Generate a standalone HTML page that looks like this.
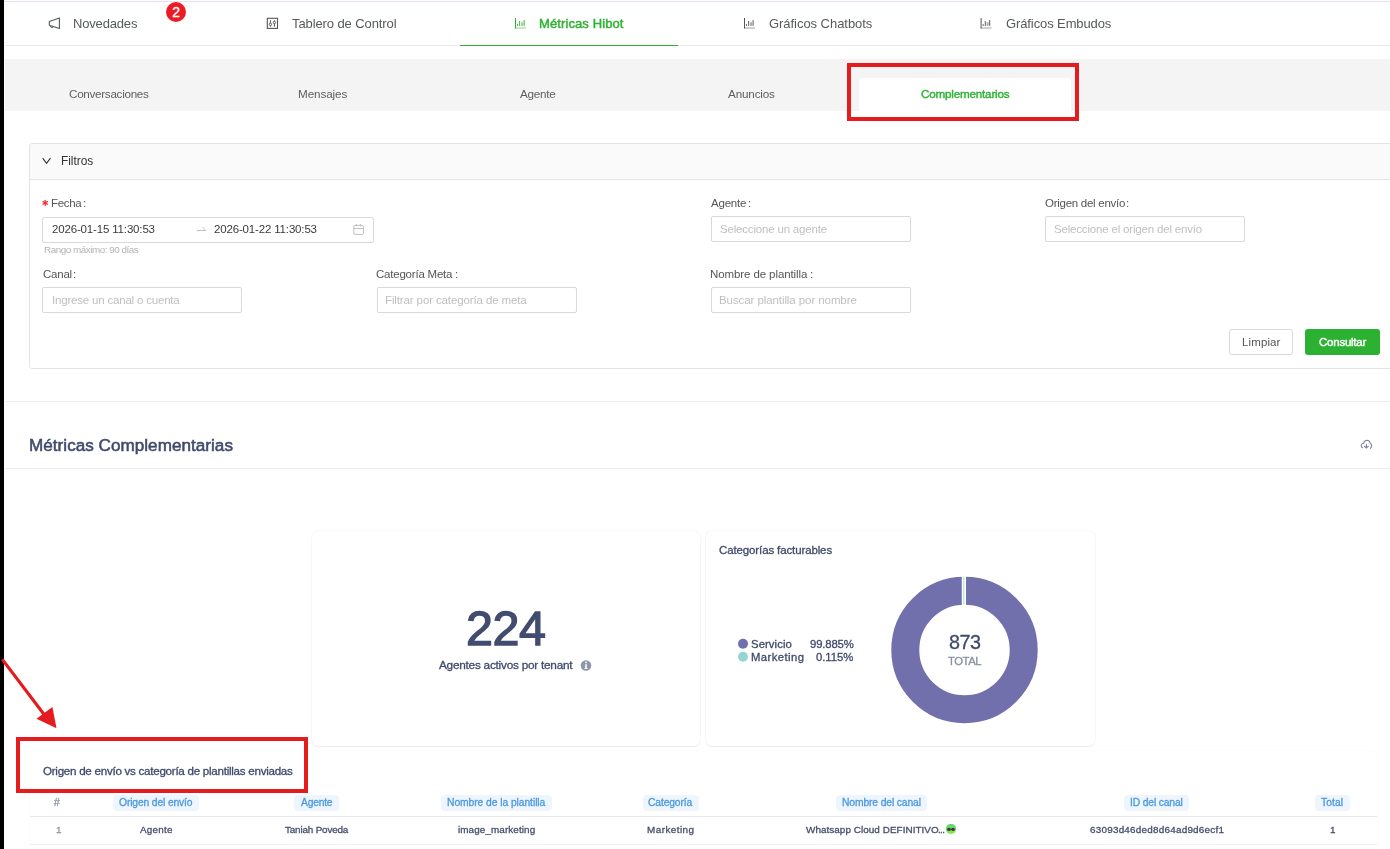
<!DOCTYPE html>
<html><head><meta charset="utf-8">
<style>
html,body{margin:0;padding:0;}
body{width:1390px;height:849px;overflow:hidden;position:relative;background:#fff;font-family:"Liberation Sans",sans-serif;}
.a{position:absolute;box-sizing:border-box;}
.t{position:absolute;white-space:nowrap;will-change:transform;}
.inp{position:absolute;box-sizing:border-box;border:1px solid #d9d9d9;border-radius:2px;background:#fff;height:26px;}
.pill{position:absolute;background:#eef5fd;border-radius:4px;height:16px;top:795px;}
</style></head><body>
<!-- top nav -->
<div class="a" style="left:4px;top:1px;width:1386px;height:1px;background:#ecdff0"></div>
<div class="a" style="left:5px;top:45px;width:1385px;height:1px;background:#e9e9e9"></div>
<div class="a" style="left:460px;top:45px;width:218px;height:1px;background:#2db12f"></div>
<svg class="a" style="left:0;top:0" width="1390" height="50">
 <!-- megaphone -->
 <g fill="none" stroke="#505c53" stroke-width="1.1" stroke-linejoin="round">
  <path d="M49.3 21.4 L59.4 18 L59.4 28.5 L49.3 25.3 Z"/>
  <path d="M50.4 25.7 Q50.5 27.6 52 27.6 Q53.3 27.5 53.3 26.4" stroke-width="0.9"/>
 </g>
 <!-- tablero icon -->
 <g fill="none" stroke="#555" stroke-width="1.1">
  <rect x="267.3" y="18.3" width="10.2" height="10.1"/>
  <line x1="270.4" y1="20.2" x2="270.4" y2="23.2" stroke-width="1"/>
  <line x1="270.4" y1="25.6" x2="270.4" y2="26.8" stroke-width="1"/>
  <line x1="274.4" y1="20.2" x2="274.4" y2="21.3" stroke-width="1"/>
  <line x1="274.4" y1="23.7" x2="274.4" y2="26.7" stroke-width="1"/>
  <circle cx="270.4" cy="24.4" r="1.2" stroke-width="0.9"/>
  <circle cx="274.4" cy="22.5" r="1.2" stroke-width="0.9"/>
 </g>
 <!-- chart icons -->
 <g id="chart" fill="#2db232">
  <rect x="515" y="18" width="1" height="10.5"/>
  <rect x="515" y="27.5" width="11" height="1" opacity="0.55"/>
  <rect x="517.1" y="24.1" width="0.9" height="1.9"/>
  <rect x="519.2" y="21" width="0.9" height="5"/>
  <rect x="521" y="22.3" width="2" height="3.6" opacity="0.5"/>
  <rect x="523.6" y="20.1" width="1" height="5.8"/>
 </g>
 <g fill="#555" transform="translate(229,0)">
  <rect x="515" y="18" width="1" height="10.5"/>
  <rect x="515" y="27.5" width="11" height="1" opacity="0.55"/>
  <rect x="517.1" y="24.1" width="0.9" height="1.9"/>
  <rect x="519.2" y="21" width="0.9" height="5"/>
  <rect x="521" y="22.3" width="2" height="3.6" opacity="0.5"/>
  <rect x="523.6" y="20.1" width="1" height="5.8"/>
 </g>
 <g fill="#555" transform="translate(465.6,0)">
  <rect x="515" y="18" width="1" height="10.5"/>
  <rect x="515" y="27.5" width="11" height="1" opacity="0.55"/>
  <rect x="517.1" y="24.1" width="0.9" height="1.9"/>
  <rect x="519.2" y="21" width="0.9" height="5"/>
  <rect x="521" y="22.3" width="2" height="3.6" opacity="0.5"/>
  <rect x="523.6" y="20.1" width="1" height="5.8"/>
 </g>
 <circle cx="176" cy="12" r="10" fill="#ec1c24"/>
 <text x="176.1" y="17" font-family="Liberation Sans" font-size="14" font-weight="400" fill="#fff" text-anchor="middle" stroke="#fff" stroke-width="0.35">2</text>
</svg>
<!-- sub tabs band -->
<div class="a" style="left:5px;top:59px;width:1385px;height:52px;background:#f4f4f4"></div>
<div class="a" style="left:859px;top:78px;width:212px;height:33px;background:#fff;border-radius:3px 3px 0 0"></div>
<!-- filter card -->
<div class="a" style="left:29px;top:143px;width:1380px;height:226px;border:1px solid #e3e3e3;border-radius:3px;background:#fff"></div>
<div class="a" style="left:30px;top:144px;width:1380px;height:36px;background:#fafafa;border-bottom:1px solid #e3e3e3;border-radius:2px 0 0 0"></div>
<svg class="a" style="left:0;top:140px" width="60" height="40">
 <path d="M42.7 18.1 L46.5 23.3 L50.5 18.1" fill="none" stroke="#333" stroke-width="1.1"/>
</svg>
<svg class="a" style="left:38px;top:196px" width="14" height="14">
 <g stroke="#f5222d" stroke-width="1.2" stroke-linecap="round">
  <line x1="7.2" y1="4.3" x2="7.2" y2="9.6"/>
  <line x1="4.9" y1="5.6" x2="9.5" y2="8.3"/>
  <line x1="4.9" y1="8.3" x2="9.5" y2="5.6"/>
 </g>
</svg>
<div class="inp" style="left:42px;top:217px;width:332px;"></div>
<svg class="a" style="left:190px;top:218px" width="190" height="24">
 <g fill="none" stroke="#bfbfbf" stroke-width="1">
  <path d="M6.9 12.5 L15.8 12.5 L12.6 9.2"/>
  <rect x="163.8" y="7.4" width="9.6" height="9" rx="1.2"/>
  <line x1="163.8" y1="10.5" x2="173.4" y2="10.5"/>
  <line x1="166.4" y1="6" x2="166.4" y2="8.5"/>
  <line x1="170.4" y1="6" x2="170.4" y2="8.5"/>
 </g>
</svg>
<div class="inp" style="left:711px;top:216px;width:200px;"></div>
<div class="inp" style="left:1045px;top:216px;width:200px;"></div>
<div class="inp" style="left:42px;top:287px;width:200px;"></div>
<div class="inp" style="left:377px;top:287px;width:200px;"></div>
<div class="inp" style="left:711px;top:287px;width:200px;"></div>
<div class="a" style="left:1229px;top:329px;width:64px;height:26px;border:1px solid #d9d9d9;border-radius:3px;background:#fff"></div>
<div class="a" style="left:1305px;top:329px;width:75px;height:26px;border-radius:3px;background:#2db133"></div>
<!-- metrics section -->
<div class="a" style="left:5px;top:401px;width:1385px;height:1px;background:#ededed"></div>
<div class="a" style="left:5px;top:468px;width:1385px;height:1px;background:#ededed"></div>
<svg class="a" style="left:1356px;top:434px" width="20" height="20">
 <g fill="none" stroke="#7d859b" stroke-width="1.1" stroke-linecap="round">
  <path d="M6.6 13.7 Q5 13.2 5.2 11.3 Q5.5 9.5 7.6 9.3 Q8.3 6.2 11 6.2 Q13.8 6.3 14.3 9.5 Q15.8 10.3 15.6 12.2 Q15.4 13.6 14.4 14.3"/>
  <path d="M10.4 10.4 L10.4 14 M8.5 12.3 L10.4 14 L12.3 12.3"/>
 </g>
</svg>
<div class="a" style="left:312px;top:531px;width:388px;height:215px;border-radius:6px;background:#fff;box-shadow:0 1px 2px rgba(0,0,0,0.06),0 0 1.5px rgba(0,0,0,0.10)"></div>
<div class="a" style="left:706px;top:531px;width:389px;height:215px;border-radius:6px;background:#fff;box-shadow:0 1px 2px rgba(0,0,0,0.06),0 0 1.5px rgba(0,0,0,0.10)"></div>
<svg class="a" style="left:570px;top:650px" width="30" height="30">
 <circle cx="16" cy="15.5" r="5.3" fill="#8f96a9"/>
 <circle cx="16" cy="12.3" r="0.9" fill="#fff"/>
 <path d="M15.2 14.2 L16.8 14.2 L16.8 18.2 L17.8 18.2 L17.8 19 L14.3 19 L14.3 18.2 L15.2 18.2 Z" fill="#fff"/>
</svg>
<svg class="a" style="left:720px;top:560px" width="340" height="180">
 <circle cx="23" cy="83.7" r="5" fill="#7170ae"/>
 <circle cx="23" cy="96.7" r="5" fill="#97d5d5"/>
 <circle cx="244.5" cy="90" r="59.2" fill="none" stroke="#7170ac" stroke-width="28"/>
 <rect x="241.8" y="15" width="4.2" height="30" fill="#fff"/>
 <rect x="243.3" y="16.5" width="1" height="28" fill="#9fdada"/>
</svg>
<!-- table card -->
<div class="a" style="left:30px;top:751px;width:1347px;height:120px;border-radius:6px;background:#fff;box-shadow:0 0 1.5px rgba(0,0,0,0.08)"></div>
<div class="pill" style="left:113px;width:86px"></div>
<div class="pill" style="left:294px;width:45px"></div>
<div class="pill" style="left:441px;width:111px"></div>
<div class="pill" style="left:643px;width:56px"></div>
<div class="pill" style="left:836px;width:91px"></div>
<div class="pill" style="left:1124px;width:65px"></div>
<div class="pill" style="left:1315px;width:35px"></div>
<div class="a" style="left:30px;top:816px;width:1347px;height:1px;background:#e8e8ee"></div>
<div class="a" style="left:30px;top:844px;width:1347px;height:1px;background:#efeff3"></div>
<svg class="a" style="left:940px;top:820px" width="22" height="20">
 <defs><linearGradient id="ag" x1="0" y1="0" x2="0" y2="1"><stop offset="0" stop-color="#4fdc6a"/><stop offset="1" stop-color="#8be84f"/></linearGradient></defs>
 <path d="M11 3.9 Q16.2 4 16.1 9.2 Q15.8 13.5 11 14.1 Q6.2 13.5 5.9 9.2 Q5.8 4 11 3.9 Z" fill="url(#ag)"/>
 <ellipse cx="9" cy="9.3" rx="1.9" ry="1.6" fill="#4b2747"/>
 <ellipse cx="13" cy="9.3" rx="1.9" ry="1.6" fill="#4b2747"/>
</svg>
<span class="t" id="t0" style="left:72.99px;top:17.01px;font-size:13px;line-height:13px;font-weight:400;color:#525d56;letter-spacing:-0.169px;">Novedades</span>
<span class="t" id="t1" style="left:292.03px;top:17.01px;font-size:13px;line-height:13px;font-weight:400;color:#555a58;letter-spacing:-0.100px;">Tablero de Control</span>
<span class="t" id="t2" style="left:539.01px;top:17.01px;font-size:13px;line-height:13px;font-weight:400;color:#2db232;letter-spacing:0.105px;-webkit-text-stroke:0.45px #2db232;">Métricas Hibot</span>
<span class="t" id="t3" style="left:768.54px;top:17.01px;font-size:13px;line-height:13px;font-weight:400;color:#555a58;letter-spacing:-0.045px;">Gráficos Chatbots</span>
<span class="t" id="t4" style="left:1005.52px;top:17.01px;font-size:13px;line-height:13px;font-weight:400;color:#555a58;letter-spacing:-0.104px;">Gráficos Embudos</span>
<span class="t" id="t5" style="left:69.29px;top:88.00px;font-size:11.7px;line-height:11.7px;font-weight:400;color:#5f5f5f;letter-spacing:-0.301px;">Conversaciones</span>
<span class="t" id="t6" style="left:298.12px;top:88.00px;font-size:11.7px;line-height:11.7px;font-weight:400;color:#5f5f5f;letter-spacing:-0.109px;">Mensajes</span>
<span class="t" id="t7" style="left:519.80px;top:88.00px;font-size:11.7px;line-height:11.7px;font-weight:400;color:#5f5f5f;letter-spacing:-0.251px;">Agente</span>
<span class="t" id="t8" style="left:728.30px;top:88.00px;font-size:11.7px;line-height:11.7px;font-weight:400;color:#5f5f5f;letter-spacing:-0.165px;">Anuncios</span>
<span class="t" id="t9" style="left:920.93px;top:88.00px;font-size:11.7px;line-height:11.7px;font-weight:400;color:#2db232;letter-spacing:-0.214px;-webkit-text-stroke:0.4px #2db232;">Complementarios</span>
<span class="t" id="t10" style="left:61.07px;top:156.00px;font-size:11.9px;line-height:11.9px;font-weight:400;color:#333333;letter-spacing:-0.033px;">Filtros</span>
<span class="t" id="t11" style="left:50.69px;top:198.02px;font-size:11.5px;line-height:11.5px;font-weight:400;color:#555555;letter-spacing:-0.308px;">Fecha</span>
<span class="t" id="t12" style="left:82.70px;top:198.02px;font-size:11.5px;line-height:11.5px;font-weight:400;color:#555555;letter-spacing:0.000px;">:</span>
<span class="t" id="t13" style="left:51.84px;top:224.02px;font-size:11.5px;line-height:11.5px;font-weight:400;color:#3a3a3a;letter-spacing:-0.162px;">2026-01-15 11:30:53</span>
<span class="t" id="t14" style="left:213.78px;top:224.02px;font-size:11.5px;line-height:11.5px;font-weight:400;color:#3a3a3a;letter-spacing:-0.162px;">2026-01-22 11:30:53</span>
<span class="t" id="t15" style="left:44.29px;top:245.01px;font-size:9.9px;line-height:9.9px;font-weight:400;color:#b3b3b3;letter-spacing:-0.475px;">Rango máximo: 90 días</span>
<span class="t" id="t16" style="left:711.47px;top:198.02px;font-size:11.5px;line-height:11.5px;font-weight:400;color:#555555;letter-spacing:-0.207px;">Agente</span>
<span class="t" id="t17" style="left:747.70px;top:198.02px;font-size:11.5px;line-height:11.5px;font-weight:400;color:#555555;letter-spacing:0.000px;">:</span>
<span class="t" id="t18" style="left:1044.96px;top:198.02px;font-size:11.5px;line-height:11.5px;font-weight:400;color:#555555;letter-spacing:-0.272px;">Origen del envío</span>
<span class="t" id="t19" style="left:1126.18px;top:198.02px;font-size:11.5px;line-height:11.5px;font-weight:400;color:#555555;letter-spacing:0.000px;">:</span>
<span class="t" id="t20" style="left:719.86px;top:224.02px;font-size:11.5px;line-height:11.5px;font-weight:400;color:#bfbfbf;letter-spacing:-0.185px;">Seleccione un agente</span>
<span class="t" id="t21" style="left:1054.43px;top:224.02px;font-size:11.5px;line-height:11.5px;font-weight:400;color:#bfbfbf;letter-spacing:-0.179px;">Seleccione el origen del envío</span>
<span class="t" id="t22" style="left:42.56px;top:269.02px;font-size:11.5px;line-height:11.5px;font-weight:400;color:#555555;letter-spacing:-0.226px;">Canal</span>
<span class="t" id="t23" style="left:72.62px;top:269.02px;font-size:11.5px;line-height:11.5px;font-weight:400;color:#555555;letter-spacing:0.000px;">:</span>
<span class="t" id="t24" style="left:376.29px;top:269.02px;font-size:11.5px;line-height:11.5px;font-weight:400;color:#555555;letter-spacing:-0.215px;">Categoría Meta</span>
<span class="t" id="t25" style="left:454.70px;top:269.02px;font-size:11.5px;line-height:11.5px;font-weight:400;color:#555555;letter-spacing:0.000px;">:</span>
<span class="t" id="t26" style="left:710.45px;top:269.02px;font-size:11.5px;line-height:11.5px;font-weight:400;color:#555555;letter-spacing:-0.096px;">Nombre de plantilla</span>
<span class="t" id="t27" style="left:809.62px;top:269.02px;font-size:11.5px;line-height:11.5px;font-weight:400;color:#555555;letter-spacing:0.000px;">:</span>
<span class="t" id="t28" style="left:51.79px;top:295.02px;font-size:11.5px;line-height:11.5px;font-weight:400;color:#bfbfbf;letter-spacing:-0.191px;">Ingrese un canal o cuenta</span>
<span class="t" id="t29" style="left:385.49px;top:295.02px;font-size:11.5px;line-height:11.5px;font-weight:400;color:#bfbfbf;letter-spacing:-0.121px;">Filtrar por categoría de meta</span>
<span class="t" id="t30" style="left:719.47px;top:295.02px;font-size:11.5px;line-height:11.5px;font-weight:400;color:#bfbfbf;letter-spacing:-0.083px;">Buscar plantilla por nombre</span>
<span class="t" id="t31" style="left:1241.53px;top:337.02px;font-size:11.5px;line-height:11.5px;font-weight:400;color:#555555;letter-spacing:0.121px;">Limpiar</span>
<span class="t" id="t32" style="left:1318.51px;top:337.02px;font-size:11.5px;line-height:11.5px;font-weight:400;color:#ffffff;letter-spacing:-0.239px;-webkit-text-stroke:0.4px #ffffff;">Consultar</span>
<span class="t" id="t33" style="left:28.62px;top:437.01px;font-size:17.1px;line-height:17.1px;font-weight:400;color:#3f4a6b;letter-spacing:0.028px;-webkit-text-stroke:0.55px #3f4a6b;">Métricas Complementarias</span>
<span class="t" id="t34" style="left:465.86px;top:604.01px;font-size:48.5px;line-height:48.5px;font-weight:400;color:#424c6e;letter-spacing:-0.520px;-webkit-text-stroke:1.3px #424c6e;">224</span>
<span class="t" id="t35" style="left:439.23px;top:660.01px;font-size:11.8px;line-height:11.8px;font-weight:400;color:#3f4a6b;letter-spacing:-0.245px;-webkit-text-stroke:0.3px #3f4a6b;">Agentes activos por tenant</span>
<span class="t" id="t36" style="left:719.03px;top:545.02px;font-size:11.5px;line-height:11.5px;font-weight:400;color:#3f4a6b;letter-spacing:-0.122px;-webkit-text-stroke:0.3px #3f4a6b;">Categorías facturables</span>
<span class="t" id="t37" style="left:750.55px;top:639.01px;font-size:11.3px;line-height:11.3px;font-weight:400;color:#3f4a6b;letter-spacing:0.093px;-webkit-text-stroke:0.3px #3f4a6b;">Servicio</span>
<span class="t" id="t38" style="left:809.63px;top:639.01px;font-size:11.3px;line-height:11.3px;font-weight:400;color:#3f4a6b;letter-spacing:-0.140px;-webkit-text-stroke:0.3px #3f4a6b;">99.885%</span>
<span class="t" id="t39" style="left:750.64px;top:652.01px;font-size:11.3px;line-height:11.3px;font-weight:400;color:#3f4a6b;letter-spacing:0.431px;-webkit-text-stroke:0.3px #3f4a6b;">Marketing</span>
<span class="t" id="t40" style="left:816.00px;top:652.01px;font-size:11.3px;line-height:11.3px;font-weight:400;color:#3f4a6b;letter-spacing:-0.037px;-webkit-text-stroke:0.3px #3f4a6b;">0.115%</span>
<span class="t" id="t41" style="left:949.23px;top:633.00px;font-size:19.8px;line-height:19.8px;font-weight:400;color:#414b6d;letter-spacing:-0.561px;-webkit-text-stroke:0.3px #414b6d;">873</span>
<span class="t" id="t42" style="left:948.28px;top:656.01px;font-size:11.3px;line-height:11.3px;font-weight:400;color:#8790a3;letter-spacing:-0.452px;-webkit-text-stroke:0.3px #8790a3;">TOTAL</span>
<span class="t" id="t43" style="left:43.29px;top:765.01px;font-size:11.6px;line-height:11.6px;font-weight:400;color:#3f4a6b;letter-spacing:-0.262px;-webkit-text-stroke:0.3px #3f4a6b;">Origen de envío vs categoría de plantillas enviadas</span>
<span class="t" id="t44" style="left:53.51px;top:798.02px;font-size:10.3px;line-height:10.3px;font-weight:400;color:#8e94a5;letter-spacing:0.000px;-webkit-text-stroke:0.3px #8e94a5;">#</span>
<span class="t" id="t45" style="left:119.49px;top:798.02px;font-size:10.3px;line-height:10.3px;font-weight:400;color:#4a98e0;letter-spacing:-0.132px;-webkit-text-stroke:0.3px #4a98e0;">Origen del envío</span>
<span class="t" id="t46" style="left:300.84px;top:798.02px;font-size:10.3px;line-height:10.3px;font-weight:400;color:#4a98e0;letter-spacing:-0.212px;-webkit-text-stroke:0.3px #4a98e0;">Agente</span>
<span class="t" id="t47" style="left:447.40px;top:798.02px;font-size:10.3px;line-height:10.3px;font-weight:400;color:#4a98e0;letter-spacing:-0.061px;-webkit-text-stroke:0.3px #4a98e0;">Nombre de la plantilla</span>
<span class="t" id="t48" style="left:648.31px;top:798.02px;font-size:10.3px;line-height:10.3px;font-weight:400;color:#4a98e0;letter-spacing:-0.124px;-webkit-text-stroke:0.3px #4a98e0;">Categoría</span>
<span class="t" id="t49" style="left:842.27px;top:798.02px;font-size:10.3px;line-height:10.3px;font-weight:400;color:#4a98e0;letter-spacing:-0.116px;-webkit-text-stroke:0.3px #4a98e0;">Nombre del canal</span>
<span class="t" id="t50" style="left:1130.09px;top:798.02px;font-size:10.3px;line-height:10.3px;font-weight:400;color:#4a98e0;letter-spacing:-0.142px;-webkit-text-stroke:0.3px #4a98e0;">ID del canal</span>
<span class="t" id="t51" style="left:1321.32px;top:798.02px;font-size:10.3px;line-height:10.3px;font-weight:400;color:#4a98e0;letter-spacing:0.063px;-webkit-text-stroke:0.3px #4a98e0;">Total</span>
<span class="t" id="t52" style="left:55.53px;top:825.01px;font-size:9.9px;line-height:9.9px;font-weight:400;color:#8e94a5;letter-spacing:0.000px;-webkit-text-stroke:0.3px #8e94a5;">1</span>
<span class="t" id="t53" style="left:140.12px;top:825.01px;font-size:9.9px;line-height:9.9px;font-weight:400;color:#454f6d;letter-spacing:0.232px;-webkit-text-stroke:0.3px #454f6d;">Agente</span>
<span class="t" id="t54" style="left:284.60px;top:825.01px;font-size:9.9px;line-height:9.9px;font-weight:400;color:#454f6d;letter-spacing:-0.169px;-webkit-text-stroke:0.3px #454f6d;">Taniah Poveda</span>
<span class="t" id="t55" style="left:458.32px;top:825.01px;font-size:9.9px;line-height:9.9px;font-weight:400;color:#454f6d;letter-spacing:0.099px;-webkit-text-stroke:0.3px #454f6d;">image_marketing</span>
<span class="t" id="t56" style="left:647.43px;top:825.01px;font-size:9.9px;line-height:9.9px;font-weight:400;color:#454f6d;letter-spacing:0.463px;-webkit-text-stroke:0.3px #454f6d;">Marketing</span>
<span class="t" id="t57" style="left:805.68px;top:825.01px;font-size:9.9px;line-height:9.9px;font-weight:400;color:#454f6d;letter-spacing:0.063px;-webkit-text-stroke:0.3px #454f6d;">Whatsapp Cloud DEFINITIVO</span>
<span class="t" id="t58" style="left:1089.54px;top:825.01px;font-size:9.9px;line-height:9.9px;font-weight:400;color:#454f6d;letter-spacing:0.237px;-webkit-text-stroke:0.3px #454f6d;">63093d46ded8d64ad9d6ecf1</span>
<span class="t" id="t59" style="left:1329.78px;top:825.01px;font-size:9.9px;line-height:9.9px;font-weight:400;color:#454f6d;letter-spacing:0.000px;-webkit-text-stroke:0.3px #454f6d;">1</span>
<span class="t" id="t60" style="left:938.30px;top:825.01px;font-size:9.9px;line-height:9.9px;font-weight:400;color:#454f6d;letter-spacing:-0.670px;-webkit-text-stroke:0.3px #454f6d;">...</span>
<!-- annotations -->
<div class="a" style="left:847px;top:63px;width:232px;height:58px;border:4px solid #e41b1f"></div>
<div class="a" style="left:16px;top:737px;width:292px;height:56px;border:4px solid #e41b1f"></div>
<div class="a" style="left:0;top:0;width:4px;height:849px;background:#000"></div>
<svg class="a" style="left:0;top:640px" width="80" height="100">
 <line x1="2.3" y1="19.4" x2="46" y2="77" stroke="#e41b1f" stroke-width="3.2"/>
 <polygon points="56.5,88.3 36.5,78.7 52.4,67.1" fill="#e41b1f"/>
</svg>
</body></html>
